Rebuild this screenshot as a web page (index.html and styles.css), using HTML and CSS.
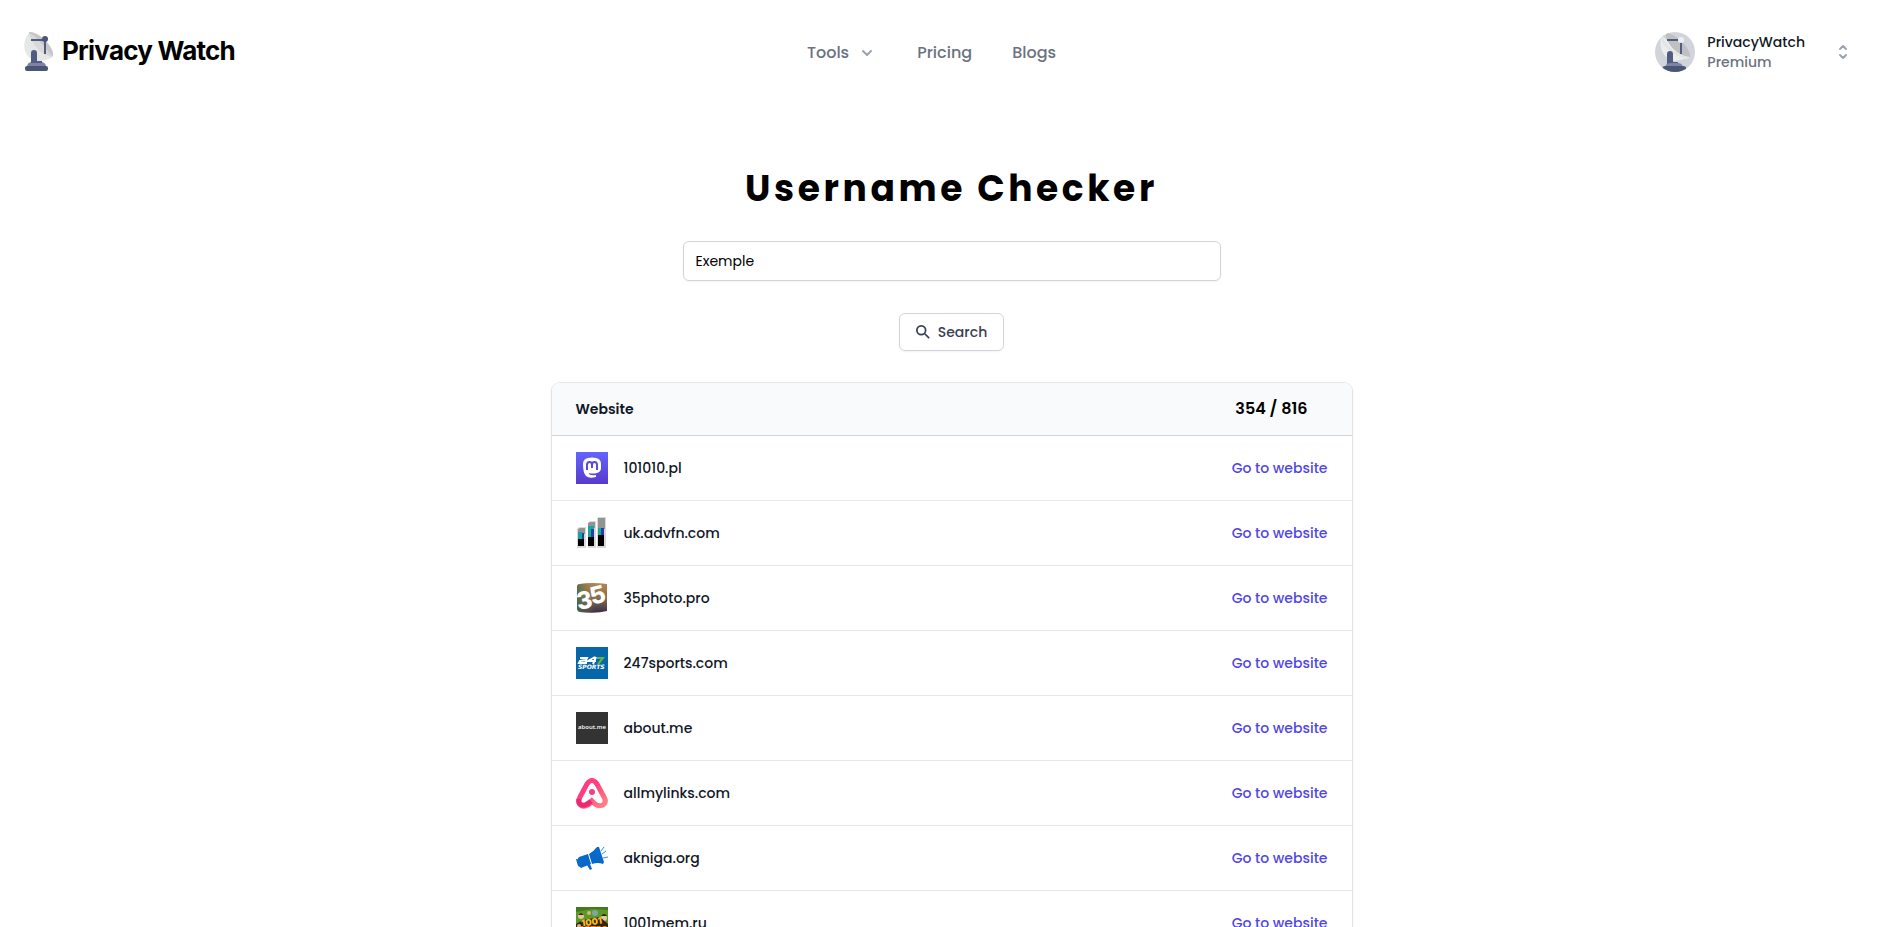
FILE: index.html
```
<!DOCTYPE html>
<html lang="en">
<head>
    <meta charset="UTF-8">
    <meta name="viewport" content="width=device-width, initial-scale=1.0">
    <title>Username Checker</title>
    <link rel="stylesheet" href="styles.css">
</head>
<body>
    <header class="header">
        <a href="#" class="logo">
            <svg class="logo-icon" viewBox="0 0 30 40" aria-hidden="true">
                <path d="M3 34q1-4 5-4h9q4 0 5 4z" fill="#7c84a3"/>
                <rect x="1" y="34" width="23" height="5" rx="2" fill="#4a5578"/>
                <path d="M5 1C-3 10-1 25 11 29q9 1 18-4z" fill="#e6e7e7"/>
                <path d="M5 0C15-1 31 16 29 24 21 25 8 14 5 0z" fill="#c6c8c8"/>
                <path d="M5 1C9 14 19 24 29 25 20 15 13 4 5 1z" fill="#d8d9d9"/>
                <path d="M7 8h14v14" fill="none" stroke="#525c80" stroke-width="2"/>
                <circle cx="21" cy="7" r="3" fill="#4a5578"/>
                <path d="M7 31V21q0-3 3-3t3 3v8h5v2z" fill="#525c80"/>
            </svg>
            <span class="logo-text">Privacy Watch</span>
        </a>
        <nav class="nav">
            <button type="button" class="nav-btn">Tools
                <svg width="20" height="20" viewBox="0 0 20 20" aria-hidden="true"><path d="M6 8l4 4 4-4" fill="none" stroke="#9ca3af" stroke-width="2" stroke-linecap="round" stroke-linejoin="round"/></svg>
            </button>
            <a href="#">Pricing</a>
            <a href="#">Blogs</a>
        </nav>
        <button type="button" class="profile">
            <svg class="avatar" viewBox="0 0 40 40" aria-hidden="true">
                <rect width="40" height="40" fill="#d1d5db"/>
                <path d="M7 4C3 14 7 26 20 29l14-3z" fill="#eceded"/>
                <path d="M10 0C23 3 36 17 35 25 23 24 11 13 10 0z" fill="#bfc1c1"/>
                <path d="M7 4C12 16 24 25 35 25 28 28 15 22 7 10z" fill="#e2e3e3"/>
                <path d="M12 8h14v14" fill="none" stroke="#525c80" stroke-width="2"/>
                <circle cx="26" cy="8" r="3" fill="#edf0f2"/>
                <path d="M12 32V22q0-3 3-3t3 3v8h5v2z" fill="#525c80"/>
                <path d="M10 35q1-4 6-4h7q4 0 5 4z" fill="#7c84a3"/>
                <path d="M7 36q1-2 3-2h18q3 0 3 2v4H7z" fill="#4a5578"/>
            </svg>
            <span class="profile-info">
                <span class="profile-name">PrivacyWatch</span>
                <span class="profile-plan">Premium</span>
            </span>
            <svg width="20" height="20" viewBox="0 0 20 20" aria-hidden="true"><path d="M7 7l3-3 3 3M7 13l3 3 3-3" fill="none" stroke="#9ca3af" stroke-width="2" stroke-linecap="round" stroke-linejoin="round"/></svg>
        </button>
    </header>

    <main class="main">
        <h1>Username Checker</h1>
        <form class="search-form">
            <input type="text" name="username" value="Exemple" aria-label="Username">
            <button type="submit">
                <svg width="14" height="14" viewBox="0 0 16 16" aria-hidden="true"><circle cx="6" cy="6" r="5" fill="none" stroke="#374151" stroke-width="2"/><path d="M10 10l5 5" stroke="#374151" stroke-width="2"/></svg>
                Search
            </button>
        </form>

        <div class="card">
            <table>
                <thead>
                    <tr>
                        <th>Website</th>
                        <th class="count">354 / 816</th>
                    </tr>
                </thead>
                <tbody>
                    <tr>
                        <td><div class="site">
                            <svg viewBox="0 0 32 32" aria-hidden="true">
                                <defs><linearGradient id="masto" x2="0" y2="1"><stop stop-color="#6364ff"/><stop offset="1" stop-color="#563acc"/></linearGradient></defs>
                                <rect width="32" height="32" fill="url(#masto)"/>
                                <path d="M7 12q0-5 5-6 4-1 8 0 5 1 5 6v4q0 4-4 5-4 1-8 0 0 3 7 2v2q-7 2-10-1-3-3-3-12z" fill="#fff"/>
                                <path d="M11 18v-5q0-3 2.500-3t2.500 3v3-3q0-3 2.500-3t2.500 3v5" fill="none" stroke="#5a4bdf" stroke-width="2"/>
                            </svg>
                            101010.pl</div></td>
                        <td class="action"><a href="#">Go to website</a></td>
                    </tr>
                    <tr>
                        <td><div class="site">
                            <svg viewBox="0 0 32 32" aria-hidden="true">
                                <path d="M1 12l2-2h7v21H1zM12 6l2-2h6v27h-8zM21 1l1-1h8v31h-9z" fill="#d9d9d9"/>
                                <path d="M2 12l2-1h5v6H2zM12 6l2-1h5v6h-7zM22 1h7v11h-7z" fill="#929494"/>
                                <path d="M2 15h4v8H2zM12 9h6v3h-3v9h-3zM22 11h3v9h-3z" fill="#18a6a0"/>
                                <path d="M6 16h2v7H6zM15 12h3v10h-3zM25 11h3v9h-3z" fill="#253da5"/>
                                <path d="M2 22h6v7H2zM12 20h6v9h-6zM22 18h6v11h-6z" fill="#000"/>
                            </svg>
                            uk.advfn.com</div></td>
                        <td class="action"><a href="#">Go to website</a></td>
                    </tr>
                    <tr>
                        <td><div class="site">
                            <svg viewBox="0 0 32 32" aria-hidden="true">
                                <defs>
                                    <linearGradient id="photo" x2="0" y2="1"><stop stop-color="#b9844e"/><stop offset="0.500" stop-color="#857050"/><stop offset="1" stop-color="#382e46"/></linearGradient>
                                    <linearGradient id="photo-side"><stop stop-color="#3c6b50" stop-opacity="0.800"/><stop offset="0.600" stop-color="#a77a4e" stop-opacity="0"/></linearGradient>
                                </defs>
                                <path d="M4 2q12-2 27 0v27q-11 3-27 1-3-1-3-4V5q0-3 3-3z" fill="url(#photo)"/>
                                <path d="M4 2q12-2 27 0v27q-11 3-27 1-3-1-3-4V5q0-3 3-3z" fill="url(#photo-side)"/>
                                <text x="2" y="28" class="photo" transform="rotate(-10 2 28)">3</text>
                                <text x="16" y="23" class="photo" transform="rotate(-14 16 23)">5</text>
                            </svg>
                            35photo.pro</div></td>
                        <td class="action"><a href="#">Go to website</a></td>
                    </tr>
                    <tr>
                        <td><div class="site">
                            <svg viewBox="0 0 32 32" aria-hidden="true">
                                <rect width="32" height="32" fill="#0567a8"/>
                                <path d="M4 11h7l-1 2-6 1-1 2h8M19 10l-7 4h8M17 17l3-7" fill="none" stroke="#fff" stroke-width="2"/>
                                <path d="M21 11h6l-5 6" fill="none" stroke="#65b345" stroke-width="2"/>
                                <text x="2" y="22" class="sports">SPORTS</text>
                            </svg>
                            247sports.com</div></td>
                        <td class="action"><a href="#">Go to website</a></td>
                    </tr>
                    <tr>
                        <td><div class="site">
                            <svg viewBox="0 0 32 32" aria-hidden="true">
                                <rect width="32" height="32" fill="#333"/>
                                <text x="16" y="17" class="about">about.me</text>
                            </svg>
                            about.me</div></td>
                        <td class="action"><a href="#">Go to website</a></td>
                    </tr>
                    <tr>
                        <td><div class="site">
                            <svg viewBox="0 0 32 32" aria-hidden="true">
                                <defs><linearGradient id="links" x2="1" y2="1"><stop offset="0.400" stop-color="#ff3d80"/><stop offset="1" stop-color="#ff8585"/></linearGradient></defs>
                                <path d="M16 25L12 28Q6 31 3 26 2 24 4 20L11 7Q16 0 21 7L28 20Q31 25 27 28 23 30 19 27L14 22" fill="none" stroke="url(#links)" stroke-width="5" stroke-linejoin="round"/>
                                <path d="M3 22q-1 7 6 6 3-1 6-4" fill="none" stroke="#ec2870" stroke-width="5"/>
                                <circle cx="16" cy="15" r="3" fill="#f33f82"/>
                            </svg>
                            allmylinks.com</div></td>
                        <td class="action"><a href="#">Go to website</a></td>
                    </tr>
                    <tr>
                        <td><div class="site">
                            <svg viewBox="0 0 32 32" aria-hidden="true">
                                <path d="M3 15l9-3 3 10-10 4-3-3-1-5zM13 12q5-3 8-7h2l5 15-1 2q-5-2-11 0zM11 23l3-1 2 5-2 1zM0 17h1l3 8-2-1z" fill="#0969c8"/>
                                <path d="M25 9l3-4M26 12l4-3M27 16l5-1" stroke="#398bd5" stroke-width="1"/>
                            </svg>
                            akniga.org</div></td>
                        <td class="action"><a href="#">Go to website</a></td>
                    </tr>
                    <tr>
                        <td><div class="site">
                            <svg viewBox="0 0 32 32" aria-hidden="true">
                                <rect width="32" height="32" fill="#5c9a25"/>
                                <path d="M0 0h32v3L16 2 0 5z" fill="#437a1c"/>
                                <circle cx="5" cy="9" r="3" fill="#e5c6a3"/><path d="M2 8q3-4 6 0" fill="#3a281c"/>
                                <circle cx="13" cy="6" r="2" fill="#d6b28c"/>
                                <circle cx="19" cy="6" r="3" fill="#7ba8a0"/>
                                <circle cx="28" cy="11" r="3" fill="#e5c6a3"/><path d="M25 9q3-4 6 0" fill="#2b2118"/>
                                <path d="M0 17l7-4 17-3 8 7v15H0z" fill="#33250f"/>
                                <text x="16" y="18" class="mem" transform="rotate(-8 16 18)">1001</text>
                                <text x="17" y="27" class="mem mem-big">MEM</text>
                                <circle cx="3" cy="19" r="2" fill="#d9b48c"/>
                            </svg>
                            1001mem.ru</div></td>
                        <td class="action"><a href="#">Go to website</a></td>
                    </tr>
                </tbody>
            </table>
        </div>
    </main>
</body>
</html>
```
FILE: styles.css
```
* { box-sizing: border-box; }
body { margin: 0; background-color: #fff; color: #111827; font-family: "Poppins", "Inter", sans-serif; font-size: 14px; line-height: 20px; }
a { text-decoration: none; color: inherit; }
button, input { font: inherit; color: inherit; }
button { background: none; border: none; padding: 0; cursor: pointer; }

.header { display: grid; grid-template-columns: 1fr auto 1fr; align-items: center; padding: 32px 50px 32px 24px; }
.logo { display: flex; align-items: center; gap: 8px; }
.logo-icon { width: 30px; height: 40px; }
.logo-text { padding-bottom: 2px; font-family: "Inter", sans-serif; font-size: 26px; font-weight: 700; line-height: 36px; color: #000; letter-spacing: -0.03em; }
.nav { display: flex; align-items: center; gap: 40px; margin-right: 14px; padding-top: 2px; font-size: 16px; font-weight: 500; line-height: 24px; color: #6b7280; }
.nav-btn { display: flex; align-items: center; gap: 8px; }
.profile { display: flex; align-items: center; justify-self: end; font-weight: 500; text-align: left; }
.avatar { width: 40px; height: 40px; border-radius: 50%; margin-right: 12px; }
.profile-info { display: flex; flex-direction: column; margin-right: 28px; }
.profile-plan { color: #6b7280; }

.main { padding: 65px 24px 0; }
h1 { margin: 0 0 32px; text-align: center; font-size: 36px; font-weight: 700; line-height: 40px; letter-spacing: 0.1em; color: #000; }
.search-form { display: flex; flex-direction: column; align-items: center; gap: 32px; max-width: 538px; margin: 0 auto 32px; }
.search-form input { width: 100%; height: 40px; padding: 8px 12px; border: 1px solid #d1d5db; border-radius: 6px; color: #000; background: #fff; box-shadow: 0 1px 2px rgba(0,0,0,0.05); }
.search-form button { display: flex; align-items: center; gap: 8px; padding: 8px 16px; height: 38px; border: 1px solid #d1d5db; border-radius: 6px; font-weight: 500; color: #374151; box-shadow: 0 1px 2px rgba(0,0,0,0.05); }

.card { max-width: 800px; margin: 0 auto; border-radius: 8px; overflow: hidden; box-shadow: 0 0 0 1px rgba(0,0,0,0.08), 0 1px 3px rgba(0,0,0,0.1); }
table { width: 100%; border-collapse: collapse; }
th { padding: 14px 24px; background: #f9fafb; border-bottom: 1px solid #d1d5db; text-align: left; font-weight: 600; line-height: 24px; }
th.count { padding-right: 44px; text-align: right; font-size: 16px; color: #000; }
td { padding: 16px 24px; border-bottom: 1px solid #e5e7eb; font-weight: 500; }
.site { display: flex; align-items: center; gap: 16px; }
.site svg { width: 32px; height: 32px; }
.action { text-align: right; }
.action a { color: #4f46e5; }

.photo { font: 800 24px "Inter", sans-serif; fill: #fff; }
.sports { font: italic 700 6px "DejaVu Sans", sans-serif; fill: #fff; }
.about { font: 600 6px "Open Sans", sans-serif; fill: #fff; text-anchor: middle; }
.mem { font: 900 9px "Inter", sans-serif; fill: #f4b92a; text-anchor: middle; }
.mem-big { font-size: 11px; fill: #ef7d1a; }
```
